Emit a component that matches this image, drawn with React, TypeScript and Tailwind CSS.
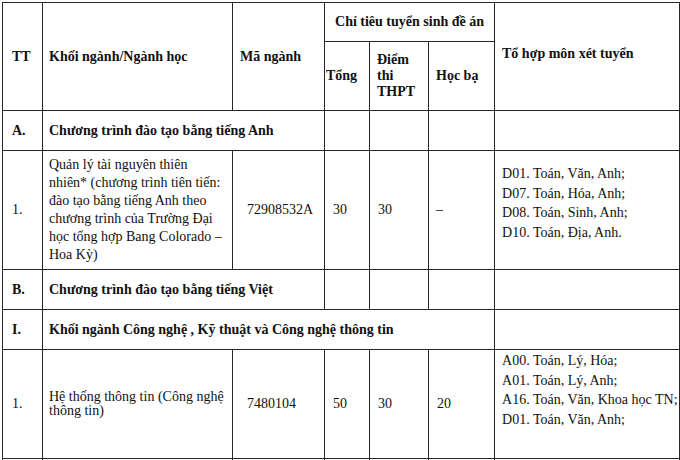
const cell = "border border-[#262626] p-0 align-middle";

const rowOneGroups = [
  "D01. Toán, Văn, Anh;",
  "D07. Toán, Hóa, Anh;",
  "D08. Toán, Sinh, Anh;",
  "D10. Toán, Địa, Anh.",
];

const itGroups = [
  "A00. Toán, Lý, Hóa;",
  "A01. Toán, Lý, Anh;",
  "A16. Toán, Văn, Khoa học TN;",
  "D01. Toán, Văn, Anh;",
];

function SectionRow({ mark, title, span }: { mark: string; title: string; span: number }) {
  return (
    <tr className="h-[40px]">
      <td className={`${cell} pl-[9px] font-bold`}>{mark}</td>
      <td colSpan={span} className={`${cell} pl-[6px] font-bold`}>
        {title}
      </td>
      {span === 2 && (
        <>
          <td className={cell}></td>
          <td className={cell}></td>
          <td className={cell}></td>
        </>
      )}
      <td className={cell}></td>
    </tr>
  );
}

export default function App() {
  return (
    <div className="min-h-screen bg-white pl-[2px] pt-[2px] font-['Liberation_Serif','Times_New_Roman',serif] text-[14px] leading-[18px] text-[#111]">
      <table className="w-[677px] table-fixed border-collapse">
        <colgroup>
          <col className="w-[40px]" />
          <col className="w-[190px]" />
          <col className="w-[92px]" />
          <col className="w-[45px]" />
          <col className="w-[59px]" />
          <col className="w-[66px]" />
          <col className="w-[185px]" />
        </colgroup>
        <thead>
          <tr className="h-[39px]">
            <th rowSpan={2} className={`${cell} pl-[9px] text-left`}>
              TT
            </th>
            <th rowSpan={2} className={`${cell} pl-[6px] text-left`}>
              Khối ngành/Ngành học
            </th>
            <th rowSpan={2} className={`${cell} pl-[7px] text-left`}>
              Mã ngành
            </th>
            <th colSpan={3} className={`${cell} text-center`}>
              Chỉ tiêu tuyển sinh đề án
            </th>
            <th rowSpan={2} className={`${cell} pl-[7px] pb-[6px] text-left`}>
              Tổ hợp môn xét tuyển
            </th>
          </tr>
          <tr className="h-[69px]">
            <th className={`${cell} pl-[1px] text-left`}>Tổng</th>
            <th className={`${cell} pl-[7px] text-left leading-[16px]`}>
              Điểm
              <br />
              thi
              <br />
              THPT
            </th>
            <th className={`${cell} pl-[7px] text-left`}>Học bạ</th>
          </tr>
        </thead>
        <tbody>
          <SectionRow mark="A." title="Chương trình đào tạo bằng tiếng Anh" span={2} />

          <tr className="h-[119px]">
            <td className={`${cell} pl-[9px]`}>1.</td>
            <td className={`${cell} pl-[6px] pr-[4px]`}>
              Quản lý tài nguyên thiên
              <br />
              nhiên* (chương trình tiên tiến:
              <br />
              đào tạo bằng tiếng Anh theo
              <br />
              chương trình của Trường Đại
              <br />
              học tổng hợp Bang Colorado –
              <br />
              Hoa Kỳ)
            </td>
            <td className={`${cell} pl-[14px]`}>72908532A</td>
            <td className={`${cell} pl-[8px]`}>30</td>
            <td className={`${cell} pl-[8px]`}>30</td>
            <td className={`${cell} pl-[7px]`}>–</td>
            <td className={`${cell} pl-[7px] pb-[14px] leading-[19.5px]`}>
              {rowOneGroups.map((g) => (
                <div key={g}>{g}</div>
              ))}
            </td>
          </tr>

          <SectionRow mark="B." title="Chương trình đào tạo bằng tiếng Việt" span={2} />
          <SectionRow
            mark="I."
            title="Khối ngành Công nghệ , Kỹ thuật và Công nghệ thông tin"
            span={5}
          />

          <tr className="h-[109px]">
            <td className={`${cell} pl-[9px]`}>1.</td>
            <td className={`${cell} pl-[6px] pr-[4px] leading-[14px]`}>
              Hệ thống thông tin (Công nghệ
              <br />
              thông tin)
            </td>
            <td className={`${cell} pl-[14px]`}>7480104</td>
            <td className={`${cell} pl-[8px]`}>50</td>
            <td className={`${cell} pl-[8px]`}>30</td>
            <td className={`${cell} pl-[8px]`}>20</td>
            <td className={`${cell} pl-[7px] pb-[28px] leading-[19.5px] whitespace-nowrap`}>
              {itGroups.map((g) => (
                <div key={g}>{g}</div>
              ))}
            </td>
          </tr>

          <tr className="h-[40px]">
            <td className={cell}></td>
            <td className={cell}></td>
            <td className={cell}></td>
            <td className={cell}></td>
            <td className={cell}></td>
            <td className={cell}></td>
            <td className={cell}></td>
          </tr>
        </tbody>
      </table>
    </div>
  );
}
